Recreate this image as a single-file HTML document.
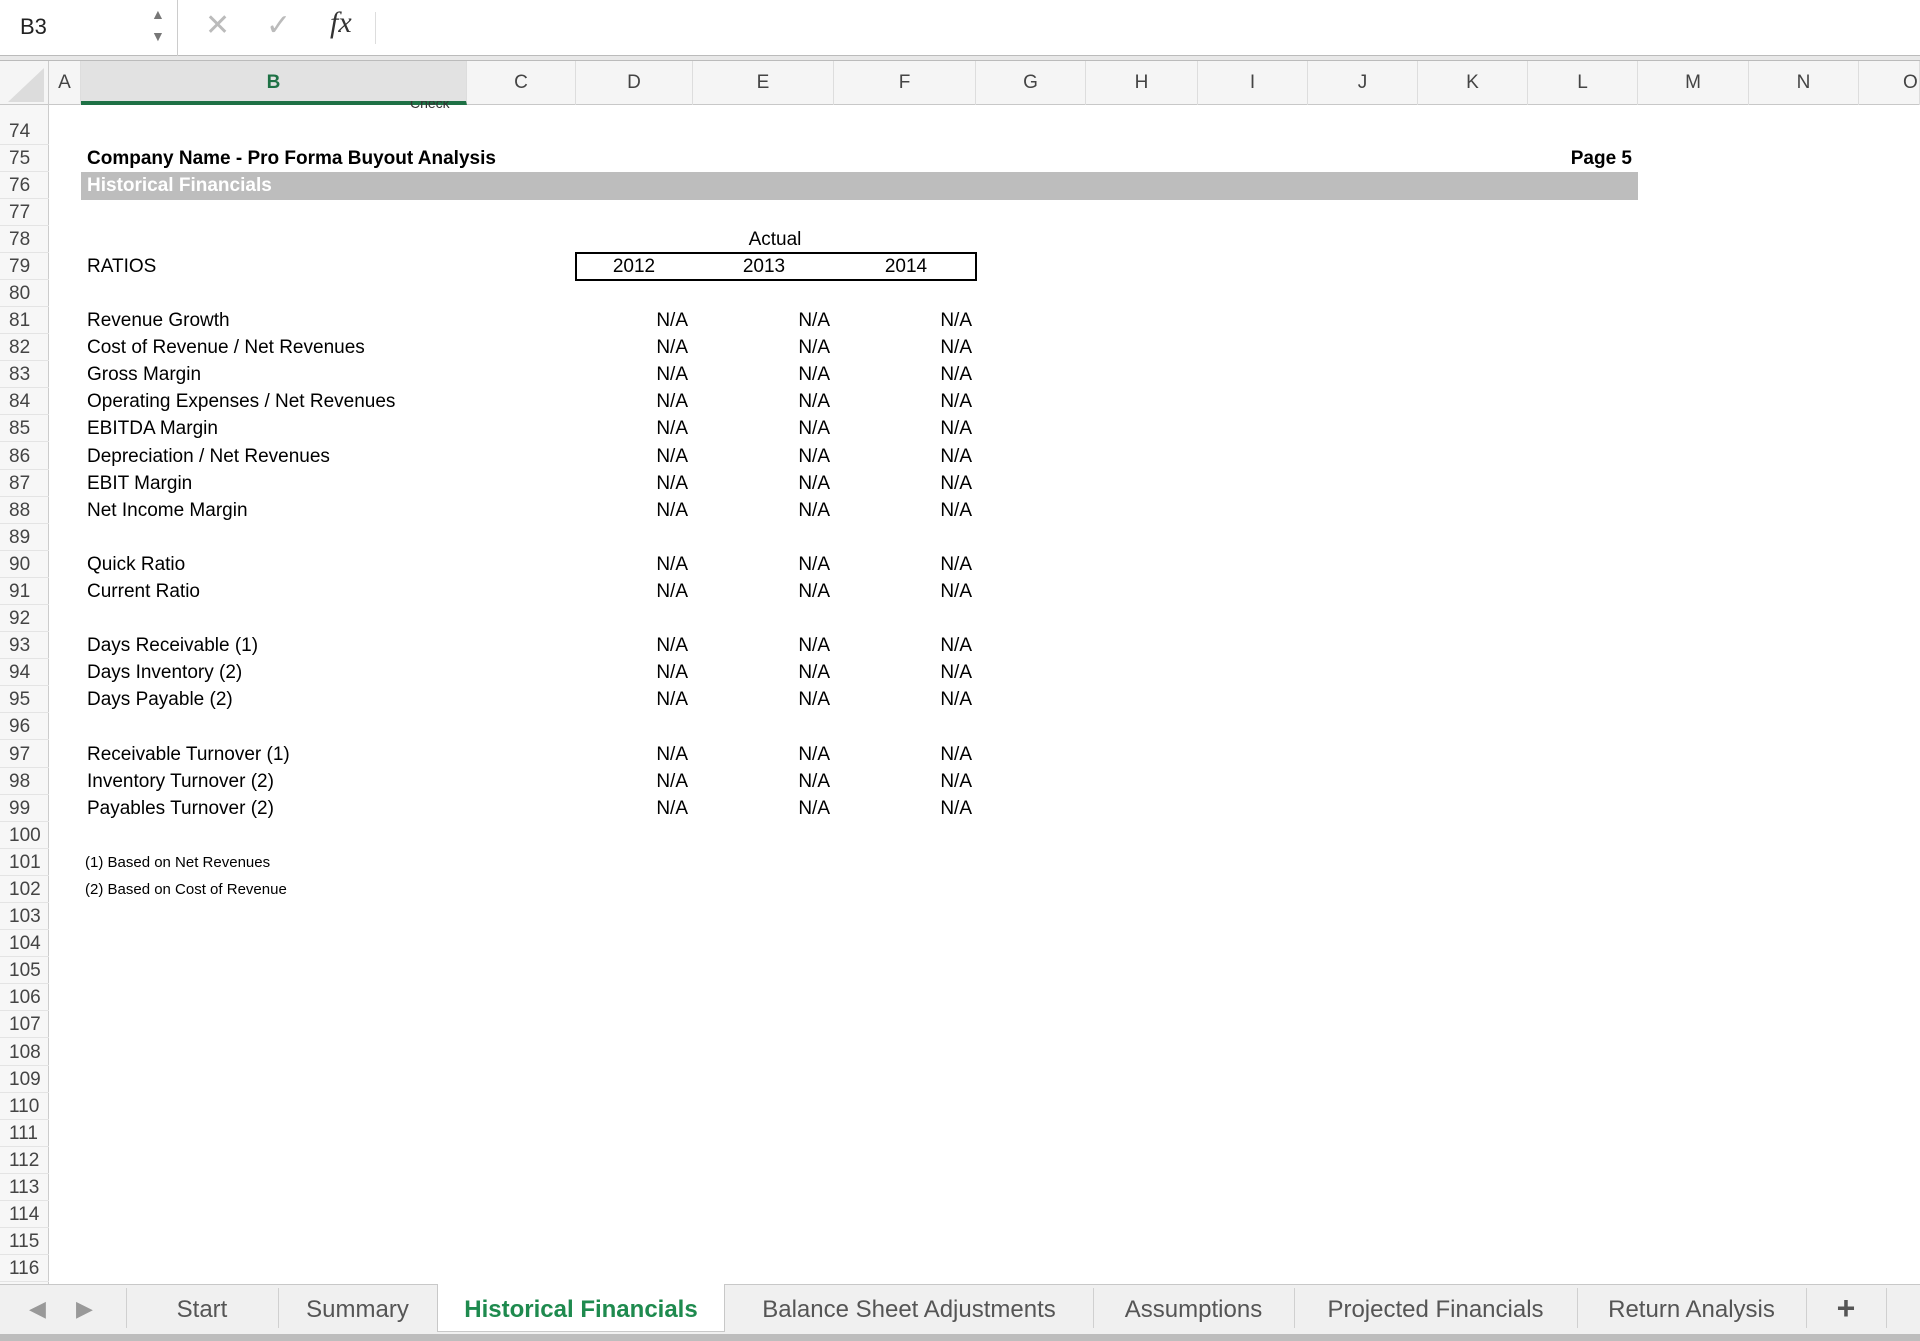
<!DOCTYPE html>
<html><head><meta charset="utf-8"><style>
*{margin:0;padding:0;box-sizing:border-box}
body{width:1920px;height:1341px;overflow:hidden;background:#fff;font-family:"Liberation Sans",Arial,sans-serif;color:#000;position:relative}
.a{position:absolute;white-space:nowrap}
.r{position:absolute;top:calc(117.5px + var(--r)*27.09px);height:27px;line-height:27px;font-size:19px;white-space:nowrap}
.rn{left:0;width:49px;padding-left:9px;color:#444;font-size:19px;border-bottom:1px solid #e4e4e4}
.na{text-align:right;width:80px}
.c1{left:608px}.c2{left:750px}.c3{left:892px}
.ch{position:absolute;top:61px;height:44px;line-height:44px;text-align:center;font-size:19px;color:#444;border-right:1px solid #ddd}
</style></head><body>
<!-- formula bar -->
<div class="a" style="left:0;top:0;width:1920px;height:56px;background:#fff;border-bottom:1px solid #bbb"></div>
<div class="a" style="left:0;top:0;width:178px;height:56px;border-right:1px solid #ccc"></div>
<div class="a" style="left:20px;top:14px;font-size:22px;color:#222">B3</div>
<div class="a" style="left:151px;top:6px;font-size:14px;color:#777">▲</div>
<div class="a" style="left:151px;top:28px;font-size:14px;color:#777">▼</div>
<div class="a" style="left:205px;top:8px;font-size:30px;color:#bbb">✕</div>
<div class="a" style="left:266px;top:8px;font-size:30px;color:#bbb">✓</div>
<div class="a" style="left:330px;top:6px;font-size:30px;font-style:italic;font-family:'Liberation Serif',serif;color:#333">fx</div>
<div class="a" style="left:375px;top:12px;width:1px;height:32px;background:#ddd"></div>
<div class="a" style="left:0;top:56px;width:1920px;height:5px;background:#e8e8e8;border-bottom:1px solid #bbb"></div>
<!-- column headers -->
<div class="a" style="left:0;top:61px;width:1920px;height:44px;background:#f5f5f5;border-bottom:1px solid #c8c8c8"></div>
<div class="a" style="left:0;top:61px;width:49px;height:44px;border-right:1px solid #ccc"></div>
<svg class="a" style="left:8px;top:68px" width="36" height="34"><polygon points="36,0 36,34 0,34" fill="#dcdcdc"/></svg>
<div class="ch" style="left:49px;width:32px">A</div>
<div class="ch" style="left:81px;width:386px;background:#e2e2e2;color:#1e7145;font-weight:bold;border-bottom:4px solid #1e7145">B</div>
<div class="ch" style="left:467px;width:109px">C</div>
<div class="ch" style="left:576px;width:117px">D</div>
<div class="ch" style="left:693px;width:141px">E</div>
<div class="ch" style="left:834px;width:142px">F</div>
<div class="ch" style="left:976px;width:110px">G</div>
<div class="ch" style="left:1086px;width:112px">H</div>
<div class="ch" style="left:1198px;width:110px">I</div>
<div class="ch" style="left:1308px;width:110px">J</div>
<div class="ch" style="left:1418px;width:110px">K</div>
<div class="ch" style="left:1528px;width:110px">L</div>
<div class="ch" style="left:1638px;width:111px">M</div>
<div class="ch" style="left:1749px;width:110px">N</div>
<div class="ch" style="left:1859px;width:61px;text-align:left;padding-left:44px">O</div>
<!-- row header column -->
<div class="a" style="left:0;top:105px;width:49px;height:1179px;background:#f7f7f7;border-right:1px solid #ccc"></div>
<div class="a" style="left:0;top:105px;width:49px;height:5px;font-size:14px;color:#444;overflow:hidden"></div>
<div class="a" style="left:410px;top:101px;font-size:14px;color:#333;height:10px;overflow:hidden;line-height:4px">Check</div>

<div class="r rn" style="--r:0">74</div><div class="r rn" style="--r:1">75</div><div class="r rn" style="--r:2">76</div><div class="r rn" style="--r:3">77</div><div class="r rn" style="--r:4">78</div><div class="r rn" style="--r:5">79</div><div class="r rn" style="--r:6">80</div><div class="r rn" style="--r:7">81</div><div class="r rn" style="--r:8">82</div><div class="r rn" style="--r:9">83</div><div class="r rn" style="--r:10">84</div><div class="r rn" style="--r:11">85</div><div class="r rn" style="--r:12">86</div><div class="r rn" style="--r:13">87</div><div class="r rn" style="--r:14">88</div><div class="r rn" style="--r:15">89</div><div class="r rn" style="--r:16">90</div><div class="r rn" style="--r:17">91</div><div class="r rn" style="--r:18">92</div><div class="r rn" style="--r:19">93</div><div class="r rn" style="--r:20">94</div><div class="r rn" style="--r:21">95</div><div class="r rn" style="--r:22">96</div><div class="r rn" style="--r:23">97</div><div class="r rn" style="--r:24">98</div><div class="r rn" style="--r:25">99</div><div class="r rn" style="--r:26">100</div><div class="r rn" style="--r:27">101</div><div class="r rn" style="--r:28">102</div><div class="r rn" style="--r:29">103</div><div class="r rn" style="--r:30">104</div><div class="r rn" style="--r:31">105</div><div class="r rn" style="--r:32">106</div><div class="r rn" style="--r:33">107</div><div class="r rn" style="--r:34">108</div><div class="r rn" style="--r:35">109</div><div class="r rn" style="--r:36">110</div><div class="r rn" style="--r:37">111</div><div class="r rn" style="--r:38">112</div><div class="r rn" style="--r:39">113</div><div class="r rn" style="--r:40">114</div><div class="r rn" style="--r:41">115</div><div class="r rn" style="--r:42">116</div>

<!-- content -->
<div class="r" style="--r:1;left:87px;font-weight:bold">Company Name - Pro Forma Buyout Analysis</div>
<div class="r" style="--r:1;left:1550px;width:82px;text-align:right;font-weight:bold">Page 5</div>
<div class="a" style="left:81px;top:172px;width:1557px;height:28px;background:#bdbdbd"></div>
<div class="r" style="--r:2;left:87px;font-weight:bold;color:#fff">Historical Financials</div>
<div class="r" style="--r:4;left:735px;width:80px;text-align:center">Actual</div>
<div class="a" style="left:575px;top:252px;width:402px;height:29px;border:2px solid #000"></div>
<div class="r" style="--r:5;left:594px;width:80px;text-align:center">2012</div>
<div class="r" style="--r:5;left:724px;width:80px;text-align:center">2013</div>
<div class="r" style="--r:5;left:866px;width:80px;text-align:center">2014</div>
<div class="r" style="--r:5;left:87px">RATIOS</div>

<div class="r" style="--r:7;left:87px">Revenue Growth</div>
<div class="r" style="--r:8;left:87px">Cost of Revenue / Net Revenues</div>
<div class="r" style="--r:9;left:87px">Gross Margin</div>
<div class="r" style="--r:10;left:87px">Operating Expenses / Net Revenues</div>
<div class="r" style="--r:11;left:87px">EBITDA Margin</div>
<div class="r" style="--r:12;left:87px">Depreciation / Net Revenues</div>
<div class="r" style="--r:13;left:87px">EBIT Margin</div>
<div class="r" style="--r:14;left:87px">Net Income Margin</div>
<div class="r" style="--r:16;left:87px">Quick Ratio</div>
<div class="r" style="--r:17;left:87px">Current Ratio</div>
<div class="r" style="--r:19;left:87px">Days Receivable (1)</div>
<div class="r" style="--r:20;left:87px">Days Inventory (2)</div>
<div class="r" style="--r:21;left:87px">Days Payable (2)</div>
<div class="r" style="--r:23;left:87px">Receivable Turnover (1)</div>
<div class="r" style="--r:24;left:87px">Inventory Turnover (2)</div>
<div class="r" style="--r:25;left:87px">Payables Turnover (2)</div>

<div class="r na c1" style="--r:7">N/A</div><div class="r na c2" style="--r:7">N/A</div><div class="r na c3" style="--r:7">N/A</div>
<div class="r na c1" style="--r:8">N/A</div><div class="r na c2" style="--r:8">N/A</div><div class="r na c3" style="--r:8">N/A</div>
<div class="r na c1" style="--r:9">N/A</div><div class="r na c2" style="--r:9">N/A</div><div class="r na c3" style="--r:9">N/A</div>
<div class="r na c1" style="--r:10">N/A</div><div class="r na c2" style="--r:10">N/A</div><div class="r na c3" style="--r:10">N/A</div>
<div class="r na c1" style="--r:11">N/A</div><div class="r na c2" style="--r:11">N/A</div><div class="r na c3" style="--r:11">N/A</div>
<div class="r na c1" style="--r:12">N/A</div><div class="r na c2" style="--r:12">N/A</div><div class="r na c3" style="--r:12">N/A</div>
<div class="r na c1" style="--r:13">N/A</div><div class="r na c2" style="--r:13">N/A</div><div class="r na c3" style="--r:13">N/A</div>
<div class="r na c1" style="--r:14">N/A</div><div class="r na c2" style="--r:14">N/A</div><div class="r na c3" style="--r:14">N/A</div>
<div class="r na c1" style="--r:16">N/A</div><div class="r na c2" style="--r:16">N/A</div><div class="r na c3" style="--r:16">N/A</div>
<div class="r na c1" style="--r:17">N/A</div><div class="r na c2" style="--r:17">N/A</div><div class="r na c3" style="--r:17">N/A</div>
<div class="r na c1" style="--r:19">N/A</div><div class="r na c2" style="--r:19">N/A</div><div class="r na c3" style="--r:19">N/A</div>
<div class="r na c1" style="--r:20">N/A</div><div class="r na c2" style="--r:20">N/A</div><div class="r na c3" style="--r:20">N/A</div>
<div class="r na c1" style="--r:21">N/A</div><div class="r na c2" style="--r:21">N/A</div><div class="r na c3" style="--r:21">N/A</div>
<div class="r na c1" style="--r:23">N/A</div><div class="r na c2" style="--r:23">N/A</div><div class="r na c3" style="--r:23">N/A</div>
<div class="r na c1" style="--r:24">N/A</div><div class="r na c2" style="--r:24">N/A</div><div class="r na c3" style="--r:24">N/A</div>
<div class="r na c1" style="--r:25">N/A</div><div class="r na c2" style="--r:25">N/A</div><div class="r na c3" style="--r:25">N/A</div>

<div class="r" style="--r:27;left:85px;font-size:15px">(1) Based on Net Revenues</div>
<div class="r" style="--r:28;left:85px;font-size:15px">(2) Based on Cost of Revenue</div>

<!-- tab bar -->
<div class="a" style="left:0;top:1284px;width:1920px;height:57px;background:#f0f0f0;border-top:1px solid #c8c8c8"></div>
<div class="a" style="left:0;top:1334px;width:1920px;height:7px;background:#bdbdbd"></div>
<div class="a" style="left:29px;top:1296px;font-size:22px;color:#999">◀</div>
<div class="a" style="left:76px;top:1296px;font-size:22px;color:#999">▶</div>
<div class="a" style="left:437px;top:1284px;width:288px;height:48px;background:#fff;border:1px solid #c8c8c8;border-top:none"></div>
<div class="a" style="left:126px;top:1288px;width:1px;height:40px;background:#d0d0d0"></div>
<div class="a" style="left:278px;top:1288px;width:1px;height:40px;background:#d0d0d0"></div>
<div class="a" style="left:1093px;top:1288px;width:1px;height:40px;background:#d0d0d0"></div>
<div class="a" style="left:1294px;top:1288px;width:1px;height:40px;background:#d0d0d0"></div>
<div class="a" style="left:1577px;top:1288px;width:1px;height:40px;background:#d0d0d0"></div>
<div class="a" style="left:1806px;top:1288px;width:1px;height:40px;background:#d0d0d0"></div>
<div class="a" style="left:1886px;top:1288px;width:1px;height:40px;background:#d0d0d0"></div>
<div class="a" style="left:126px;top:1296px;width:152px;text-align:center;font-size:24px;color:#555">Start</div>
<div class="a" style="left:278px;top:1296px;width:159px;text-align:center;font-size:24px;color:#555">Summary</div>
<div class="a" style="left:437px;top:1296px;width:288px;text-align:center;font-size:24px;color:#1e8a4e;font-weight:bold">Historical Financials</div>
<div class="a" style="left:725px;top:1296px;width:368px;text-align:center;font-size:24px;color:#555">Balance Sheet Adjustments</div>
<div class="a" style="left:1093px;top:1296px;width:201px;text-align:center;font-size:24px;color:#555">Assumptions</div>
<div class="a" style="left:1294px;top:1296px;width:283px;text-align:center;font-size:24px;color:#555">Projected Financials</div>
<div class="a" style="left:1577px;top:1296px;width:229px;text-align:center;font-size:24px;color:#555">Return Analysis</div>
<div class="a" style="left:1806px;top:1290px;width:80px;text-align:center;font-size:32px;color:#555;font-weight:bold">+</div>
</body></html>
